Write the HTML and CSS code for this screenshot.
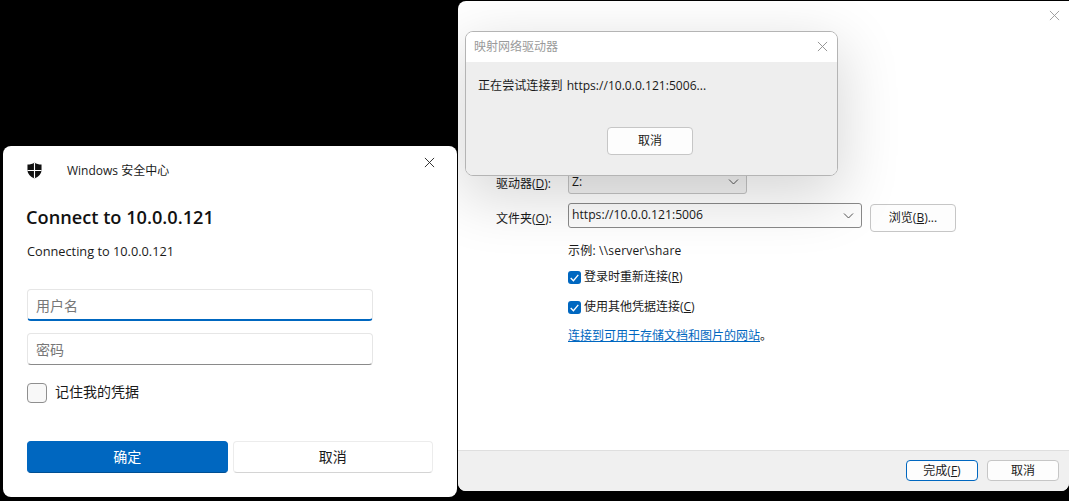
FILE: index.html
```html
<!DOCTYPE html>
<html lang="zh-CN">
<head>
<meta charset="utf-8">
<title>映射网络驱动器</title>
<link rel="stylesheet" href="styles.css">
</head>
<body>
<section class="window map-window">
  <svg class="x map-close" viewBox="0 0 12 12"><path d="M1 1l10 10M11 1L1 11"/></svg>
  <div class="map-body">
    <div class="form-grid">
      <span class="field-label drive-label">驱动器(<u>D</u>):</span>
      <div class="combo drive-combo"><span class="combo-text">Z:</span><svg class="chev" viewBox="0 0 10 6"><path d="M.5.5L5 5 9.500.5"/></svg></div>
      <span class="field-label folder-label">文件夹(<u>O</u>):</span>
      <div class="folder-row">
        <div class="combo folder-combo"><span class="combo-text">https://10.0.0.121:5006</span><svg class="chev" viewBox="0 0 10 6"><path d="M.5.5L5 5 9.500.5"/></svg></div>
        <button class="btn browse">浏览(<u>B</u>)...</button>
      </div>
      <div class="options">
        <p class="example">示例: \\server\share</p>
        <label class="check-row first"><span class="tick"><svg viewBox="0 0 12 12"><path d="M2.500 6.500l2.500 2.500 4.500-5.500"/></svg></span><span>登录时重新连接(<u>R</u>)</span></label>
        <label class="check-row second"><span class="tick"><svg viewBox="0 0 12 12"><path d="M2.500 6.500l2.500 2.500 4.500-5.500"/></svg></span><span>使用其他凭据连接(<u>C</u>)</span></label>
        <p class="link-line"><a href="#">连接到可用于存储文档和图片的网站</a>。</p>
      </div>
    </div>
  </div>
  <footer class="map-footer">
    <button class="btn small primary-outline">完成(<u>F</u>)</button>
    <button class="btn small">取消</button>
  </footer>
</section>

<section class="window progress-window">
  <header class="progress-title">
    <span>映射网络驱动器</span>
    <svg class="x" viewBox="0 0 12 12"><path d="M1 1l10 10M11 1L1 11"/></svg>
  </header>
  <div class="progress-body">
    <p class="progress-text">正在尝试连接到 https://10.0.0.121:5006...</p>
    <button class="btn progress-cancel">取消</button>
  </div>
</section>

<section class="window security-window">
  <svg class="x security-close" viewBox="0 0 12 12"><path d="M1 1l10 10M11 1L1 11"/></svg>
  <header class="security-head">
    <svg class="shield" viewBox="0 0 16 17"><path d="M8 0c2 1.500 4.500 2.200 7.500 2.200V8c0 4-3 7.200-7.500 9C3.500 15.200.5 12 .5 8V2.200C3.500 2.200 6 1.500 8 0z"/><path class="shield-cross" d="M8 0v17M.5 8.500h15"/></svg>
    <span>Windows 安全中心</span>
  </header>
  <h1 class="security-heading">Connect to 10.0.0.121</h1>
  <p class="security-sub">Connecting to 10.0.0.121</p>
  <div class="input focused">用户名</div>
  <div class="input">密码</div>
  <label class="remember"><span class="box"></span><span>记住我的凭据</span></label>
  <div class="security-actions">
    <button class="wide-btn ok">确定</button>
    <button class="wide-btn cancel">取消</button>
  </div>
</section>
</body>
</html>
```
FILE: styles.css
```css
* { box-sizing: border-box; }
html, body { margin: 0; height: 100%; }
body {
  background: #000;
  width: 1069px;
  height: 501px;
  position: relative;
  overflow: hidden;
  font-family: "Open Sans", "Noto Sans CJK SC", sans-serif;
  font-size: 12px;
  color: #1a1a1a;
}
p, h1 { margin: 0; }
u { text-underline-offset: 1px; }
button { font-family: inherit; padding: 0; }

.window { position: absolute; background: #fff; }
.x { fill: none; stroke: #444; stroke-width: 1; width: 11px; height: 11px; display: block; }

/* Map network drive window */
.map-window {
  left: 458px; top: 1px; width: 611px; height: 490px;
  border-radius: 8px 0 8px 8px;
  display: flex; flex-direction: column;
  overflow: hidden;
}
.map-close { position: absolute; top: 9px; right: 9px; stroke: #999; }
.map-body { flex: 1; padding: 164px 0 0 38px; }
.form-grid { display: grid; grid-template-columns: 72px 1fr; grid-auto-rows: min-content; }
.field-label { font-size: 12px; line-height: 16px; padding-top: 8px; height: 38px; white-space: nowrap; }
.drive-label { padding-top: 11px; }
.folder-label { height: 30px; }
.combo {
  display: flex; align-items: flex-start; justify-content: space-between;
  background: #fdfdfd; border: 1px solid #8a8a8a; border-radius: 3px;
  padding: 2px 7px 0 3px; font-size: 12.200px;
}
.combo-text { line-height: 18px; }
.chev { width: 11px; height: 6px; margin-top: 7px; fill: none; stroke: #555; stroke-width: 1; }
.drive-combo { width: 179px; height: 29px; background: #f3f3f3; border-color: #c4c4c4; padding-top: 7px; }
.drive-combo .chev { margin-top: 6px; }
.folder-row { display: flex; align-items: flex-start; gap: 8px; height: 30px; }
.folder-combo { width: 294px; height: 25px; }
.btn {
  background: #fdfdfd; border: 1px solid #c6c6c6; border-radius: 4px;
  font-size: 12px; color: #1a1a1a; line-height: 16px;
}
.browse { width: 86px; height: 28px; margin-top: 1px; }
.options { grid-column: 2; }
.example { line-height: 18px; margin-top: 9px; letter-spacing: .2px; }
.check-row { display: flex; align-items: center; gap: 3px; line-height: 18px; }
.check-row.first { margin-top: 8px; }
.check-row.second { margin-top: 12px; }
.tick {
  width: 13px; height: 13px; background: #0067c0; border-radius: 3px;
  display: block; flex: none;
}
.tick svg { display: block; width: 13px; height: 13px; fill: none; stroke: #fff; stroke-width: 1.200; }
.link-line { margin-top: 11px; line-height: 18px; }
.link-line a { color: #0067c0; }
.map-footer {
  height: 41px; background: #f0f0f0; border-top: 1px solid #dfdfdf;
  display: flex; justify-content: flex-end; align-items: flex-start;
  gap: 9px; padding: 9px 10px 0 0;
}
.small { width: 72px; height: 21px; }
.primary-outline { border-color: #0067c0; }

/* Connection progress dialog */
.progress-window {
  left: 465px; top: 31px; width: 373px; height: 145px;
  border: 1px solid #b4b4b4; border-radius: 8px;
  box-shadow: 0 18px 60px 4px rgba(0,0,0,.16);
  overflow: hidden;
  display: flex; flex-direction: column;
}
.progress-title {
  height: 30px; padding: 0 9px 0 8px; background: #fff; color: #9a9a9a;
  display: flex; align-items: center; justify-content: space-between;
  flex: none;
}
.progress-title span { margin-top: -2px; }
.progress-title .x { stroke: #8d8d8d; margin-top: -1px; }
.progress-body {
  flex: 1; background: #eee; padding: 15px 0 0 12px;
  display: flex; flex-direction: column;
}
.progress-text { line-height: 18px; color: #1a1a1a; word-spacing: 1px; font-size: 12.080px; }
.progress-cancel { width: 86px; height: 28px; margin: 32px 0 0 129px; }

/* Windows Security dialog */
.security-window {
  left: 3px; top: 146px; width: 454px; height: 351px;
  border-radius: 8px;
  padding: 0 24px;
}
.security-close { position: absolute; top: 11px; right: 22px; stroke: #222; }
.security-head { display: flex; align-items: center; height: 48px; font-size: 12px; }
.shield { width: 15px; height: 17px; margin-right: 25px; fill: #111; }
.shield-cross { stroke: #fff; stroke-width: 1.200; fill: none; }
.security-heading { font-size: 18.200px; font-weight: 600; line-height: 26px; margin-top: 10px; margin-left: -1px; color: #111; }
.security-sub { font-size: 12.750px; line-height: 18px; margin-top: 12px; }
.input {
  width: 346px; height: 32px; margin-top: 12px;
  background: #fff; border: 1px solid #e6e6e6; border-bottom-color: #8a8a8a; border-radius: 4px;
  padding: 1px 8px 0; font-size: 14px; line-height: 30px; color: #777;
}
.input.focused { margin-top: 29px; border-bottom: 2px solid #0067c0; }
.remember { display: flex; align-items: center; gap: 8px; margin-top: 18px; font-size: 14px; line-height: 20px; }
.remember span:last-child { margin-top: -2px; }
.security-actions { display: flex; gap: 5px; margin-top: 38px; }
.box { width: 20px; height: 20px; background: #f8f8f8; border: 1px solid #8f8f8f; border-radius: 4px; display: block; }
.wide-btn { width: 201px; height: 32px; border-radius: 4px; font-size: 14px; line-height: 28px; }
.ok { background: #0067c0; border: 1px solid #0067c0; border-bottom-color: #004f93; color: #fff; }
.cancel { background: #fff; border: 1px solid #ececec; border-bottom-color: #d4d4d4; color: #1a1a1a; }
```
